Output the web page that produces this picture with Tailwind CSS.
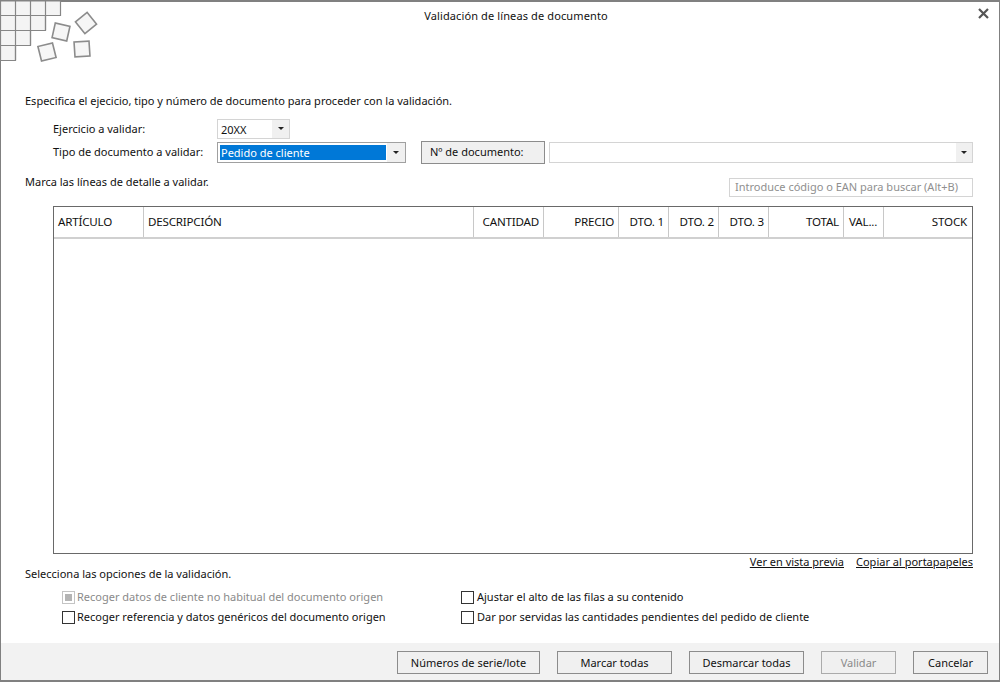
<!DOCTYPE html>
<html lang="es">

<head>
    <meta charset="UTF-8">
    <title>Validación de líneas de documento</title>
    <script src="https://cdn.jsdelivr.net/npm/@tailwindcss/browser@4"></script>
</head>

<body class="w-[1000px] h-[682px] overflow-hidden bg-white text-[11px] leading-[16px] text-[#111] font-['Noto_Sans',sans-serif]">
    <div class="relative flex flex-col w-full h-full border-x border-b-2 border-t-2 border-[#808080]">

        <!-- logo -->
        <svg class="absolute left-[-1px] top-[-2px]" width="110" height="70" viewBox="0 0 110 70" fill="#f4f4f4" stroke="#868686">
            <path stroke-width="1.200" d="M0.500 1H60.500V15.500H45.500V30.500H30.500V45.500H15.500V60.500H0.500Z" />
            <path stroke-width="1.200" fill="none" d="M15.500 1V60M30.500 1V45M45.500 1V30M1 15.500H45M1 30.500H30M1 45.500H15" />
            <g fill="#f6f6f6" stroke="#8c8c8c" stroke-width="1.600">
                <rect x="-7.500" y="-7.500" width="15" height="15" transform="translate(61 32) rotate(12.500)" />
                <rect x="-7.500" y="-7.500" width="15" height="15" transform="translate(86 23) rotate(-39)" />
                <rect x="-7.500" y="-7.500" width="15" height="15" transform="translate(47 52) rotate(-14)" />
                <rect x="-7.500" y="-7.500" width="15" height="15" transform="translate(82 49) rotate(-3.700)" />
            </g>
        </svg>

        <!-- title -->
        <div class="flex justify-center h-[91px] pt-[6px] pl-[32px] relative tracking-[0.12px]">
            <span>Validación de líneas de documento</span>
            <svg class="absolute right-[10px] top-[6px]" width="11" height="11" viewBox="0 0 11 11" stroke="#555" stroke-width="2.200">
                <path d="M1 1L10 10M10 1L1 10" />
            </svg>
        </div>

        <div class="flex flex-col pl-[24px] pr-[26px]">
            <p class="h-[16px]">Especifica el ejecicio, tipo y número de documento para proceder con la validación.</p>

            <!-- ejercicio -->
            <div class="flex items-center h-[21px] mt-[9px] pl-[28px]">
                <span class="w-[164px]">Ejercicio a validar:</span>
                <div class="flex w-[73px] h-[20px] border border-[#d4d4d4]">
                    <span class="flex-1 pl-[3px] leading-[19px]">20XX</span>
                    <span class="flex items-center justify-center w-[17px] bg-[#f0f0f0]">
                        <span class="border-x-[3px] border-t-[3px] border-x-transparent border-t-[#222]"></span>
                    </span>
                </div>
            </div>

            <!-- tipo y numero -->
            <div class="flex items-center h-[22px] mt-[2px] pl-[28px]">
                <span class="w-[164px]">Tipo de documento a validar:</span>
                <div class="flex w-[189px] h-[21px] border border-[#a0a0a0]">
                    <span class="flex-1 my-[2px] ml-[2px] pl-[1px] leading-[15px] bg-[#0078d7] text-white">Pedido de cliente</span>
                    <span class="flex items-center justify-center w-[18px] ml-[1px] bg-[#f0f0f0]">
                        <span class="border-x-[3px] border-t-[3px] border-x-transparent border-t-[#222]"></span>
                    </span>
                </div>
                <div class="flex items-center w-[124px] h-[23px] ml-[15px] pl-[8px] bg-[#f0f0f0] border border-[#8c8c8c]">Nº de documento:</div>
                <div class="flex flex-1 h-[21px] ml-[4px] border border-[#d4d4d4]">
                    <span class="flex-1"></span>
                    <span class="flex items-center justify-center w-[16px] bg-[#f0f0f0]">
                        <span class="border-x-[3px] border-t-[3px] border-x-transparent border-t-[#222]"></span>
                    </span>
                </div>
            </div>

            <div class="flex justify-between items-start h-[32px] mt-[9px] pt-[2px]">
                <p>Marca las líneas de detalle a validar.</p>
                <div class="flex items-center w-[244px] h-[19px] mt-[4px] pl-[5px] pb-[1px] border border-[#d4d4d4] text-[#8f8f8f]">Introduce código o EAN para buscar (Alt+B)</div>
            </div>

            <!-- tabla -->
            <div class="flex flex-col h-[348px] ml-[28px] mt-[2px] border border-[#696969]">
                <div class="flex h-[32px] border-b-2 border-[#d0d0d0] text-[11.6px] tracking-[-0.2px]">
                    <div class="w-[90px] flex items-center pl-[4px] border-r border-[#c8c8c8]">ARTÍCULO</div>
                    <div class="w-[330px] flex items-center pl-[4px] border-r border-[#c8c8c8]">DESCRIPCIÓN</div>
                    <div class="w-[70px] flex items-center justify-end pr-[4px] border-r border-[#c8c8c8]">CANTIDAD</div>
                    <div class="w-[75px] flex items-center justify-end pr-[4px] border-r border-[#c8c8c8]">PRECIO</div>
                    <div class="w-[50px] flex items-center justify-end pr-[4px] border-r border-[#c8c8c8]">DTO. 1</div>
                    <div class="w-[50px] flex items-center justify-end pr-[4px] border-r border-[#c8c8c8]">DTO. 2</div>
                    <div class="w-[50px] flex items-center justify-end pr-[4px] border-r border-[#c8c8c8]">DTO. 3</div>
                    <div class="w-[75px] flex items-center justify-end pr-[4px] border-r border-[#c8c8c8]">TOTAL</div>
                    <div class="w-[40px] flex items-center pl-[5px] border-r border-[#c8c8c8]">VAL...</div>
                    <div class="flex-1 flex items-center justify-end pr-[5px]">STOCK</div>
                </div>
            </div>

            <div class="flex justify-end gap-[12px] h-[16px]">
                <a href="#" class="underline">Ver en vista previa</a>
                <a href="#" class="underline">Copiar al portapapeles</a>
            </div>

            <p class="h-[16px] mt-[-4px]">Selecciona las opciones de la validación.</p>

            <!-- opciones -->
            <div class="grid grid-cols-[399px_1fr] gap-y-[4px] mt-[7px] pl-[37px]">
                <label class="flex items-center gap-[2px] text-[#8a8a8a]">
                    <span class="flex items-center justify-center w-[13px] h-[13px] border border-[#c4c4c4]"><span class="w-[7px] h-[7px] bg-[#b4b4b4]"></span></span>
                    Recoger datos de cliente no habitual del documento origen
                </label>
                <label class="flex items-center gap-[3px]">
                    <span class="w-[13px] h-[13px] border border-[#333]"></span>
                    Ajustar el alto de las filas a su contenido
                </label>
                <label class="flex items-center gap-[2px]">
                    <span class="w-[13px] h-[13px] border border-[#333]"></span>
                    Recoger referencia y datos genéricos del documento origen
                </label>
                <label class="flex items-center gap-[3px]">
                    <span class="w-[13px] h-[13px] border border-[#333]"></span>
                    Dar por servidas las cantidades pendientes del pedido de cliente
                </label>
            </div>
        </div>

        <!-- botones -->
        <div class="flex justify-end items-start gap-[17px] mt-auto h-[37px] pt-[8px] pr-[11px] bg-[#f2f2f2]">
            <button class="w-[143px] h-[23px] bg-[#f0f0f0] border border-[#8c8c8c]">Números de serie/lote</button>
            <button class="w-[115px] h-[23px] bg-[#f0f0f0] border border-[#8c8c8c]">Marcar todas</button>
            <button class="w-[115px] h-[23px] bg-[#f0f0f0] border border-[#8c8c8c]">Desmarcar todas</button>
            <button class="w-[75px] h-[23px] bg-[#f0f0f0] border border-[#ababab] text-[#8a8a8a]">Validar</button>
            <button class="w-[75px] h-[23px] bg-[#f0f0f0] border border-[#8c8c8c]">Cancelar</button>
        </div>
    </div>
</body>

</html>
